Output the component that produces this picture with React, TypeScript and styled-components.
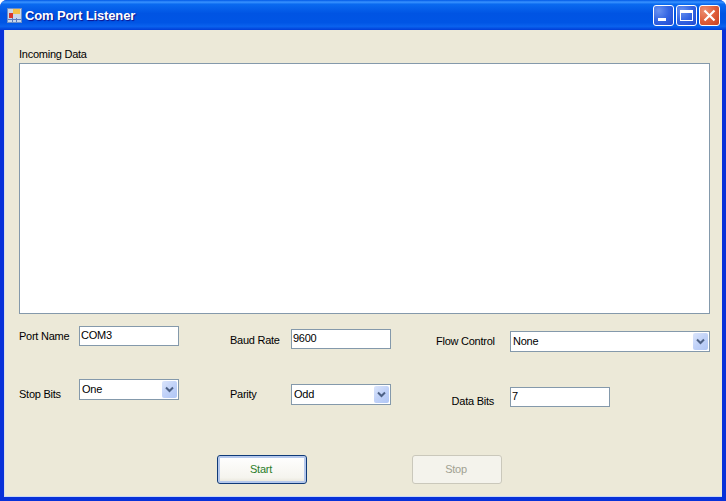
import { createGlobalStyle, styled } from "styled-components";

const GlobalStyle = createGlobalStyle`
    html, body {
        margin: 0;
        padding: 0;
        background: #ffffff;
    }
    body {
        font-family: "Liberation Sans", Arial, sans-serif;
        font-size: 11px;
        letter-spacing: -0.25px;
        color: #000000;
    }
`;

const Window = styled.div`
    width: 726px;
    height: 501px;
    display: flex;
    flex-direction: column;
    overflow: hidden;
    border-radius: 7px 7px 0 0;
    background: #0831d9;
`;

const TitleBar = styled.div`
    height: 30px;
    flex: none;
    display: flex;
    align-items: center;
    box-sizing: border-box;
    padding: 0 6px 0 7px;
    background: linear-gradient(
        180deg,
        #0058e6 0%,
        #3a93ff 7%,
        #0a6af0 14%,
        #0054e3 45%,
        #0055e5 75%,
        #0a62ee 88%,
        #003dd7 100%
    );
`;

const AppIcon = styled.svg`
    width: 15px;
    height: 15px;
    flex: none;
`;

const Title = styled.div`
    margin-left: 3px;
    flex: 1;
    font-size: 13px;
    font-weight: 700;
    letter-spacing: -0.15px;
    color: #ffffff;
    text-shadow: 1px 1px 1px #0f1089;
`;

const Controls = styled.div`
    display: flex;
    gap: 2px;
    margin-top: 1px;
`;

const ControlButton = styled.div<{ $close?: boolean }>`
    width: 21px;
    height: 21px;
    box-sizing: border-box;
    display: flex;
    align-items: center;
    justify-content: center;
    border: 1px solid #ffffff;
    border-radius: 3px;
    background: ${({ $close }) =>
        $close
            ? "radial-gradient(circle at 25% 25%, #ec8f72 0%, #e0603c 50%, #c8401f 100%)"
            : "radial-gradient(circle at 25% 25%, #6a92f0 0%, #3465e2 50%, #2148d2 100%)"};
`;

const Client = styled.div`
    flex: 1;
    margin: 0 4px 4px 4px;
    padding: 17px 12px 0 15px;
    background: #ece9d8;
    box-shadow: inset 1px 0 0 #d5dceb, inset 0 -1px 0 #c8d8f4;
    min-height: 0;
`;

const DataLabel = styled.div`
    line-height: 14px;
    height: 16px;
`;

const DataBox = styled.div`
    height: 251px;
    box-sizing: border-box;
    background: #ffffff;
    border: 1px solid #8499ab;
    width: 691px;
`;

const Fields = styled.div`
    display: grid;
    grid-template-columns: 211px 206px 1fr;
`;

const Column = styled.div`
    display: flex;
    flex-direction: column;
`;

const Field = styled.div<{ $top: number }>`
    display: flex;
    align-items: flex-start;
    margin-top: ${({ $top }) => $top}px;
`;

const FieldLabel = styled.label<{ $width: number; $dy: number; $right?: boolean }>`
    width: ${({ $width }) => $width}px;
    flex: none;
    margin-top: ${({ $dy }) => $dy}px;
    line-height: 14px;
    box-sizing: border-box;
    text-align: ${({ $right }) => ($right ? "right" : "left")};
    padding-right: ${({ $right }) => ($right ? "16px" : "0")};
`;

const TextBox = styled.input`
    width: 100px;
    height: 20px;
    box-sizing: border-box;
    padding: 0 1px 2px 1px;
    margin: 0;
    border: 1px solid #8499ab;
    border-radius: 0;
    outline: none;
    background: #ffffff;
    font: inherit;
    letter-spacing: inherit;
    color: #000000;
`;

const Combo = styled.div<{ $width: number }>`
    width: ${({ $width }) => $width}px;
    height: 21px;
    box-sizing: border-box;
    display: flex;
    align-items: center;
    justify-content: space-between;
    padding: 1px 1px 1px 2px;
    border: 1px solid #8499ab;
    background: #ffffff;
`;

const ComboText = styled.span`
    line-height: 14px;
    margin-top: -2px;
`;

const ComboArrow = styled.div`
    width: 15px;
    height: 17px;
    border-radius: 2px;
    display: flex;
    align-items: center;
    justify-content: center;
    background: linear-gradient(135deg, #dbe5fb 0%, #c1d2f8 50%, #b0c6f5 100%);
`;

const Actions = styled.div`
    display: flex;
    gap: 105px;
    margin-top: 47px;
    padding-left: 198px;
`;

const StartButton = styled.button`
    width: 90px;
    height: 29px;
    box-sizing: border-box;
    padding: 0 2px 2px 0;
    font: inherit;
    letter-spacing: inherit;
    color: #2a7d2a;
    border: 1px solid #0f3a78;
    border-radius: 3px;
    background: linear-gradient(180deg, #ffffff 0%, #f5f4ee 80%, #e6e3d6 100%);
    box-shadow: inset 0 0 0 2px #b5c8ec;
`;

const StopButton = styled.button`
    width: 90px;
    height: 29px;
    box-sizing: border-box;
    padding: 0 2px 2px 0;
    font: inherit;
    letter-spacing: inherit;
    color: #a1a192;
    border: 1px solid #cac8bb;
    border-radius: 3px;
    background: #f4f3ec;
`;

function ArrowIcon() {
    return (
        <svg width="9" height="7" viewBox="0 0 9 7">
            <path
                d="M1 1.5 L4.5 5 L8 1.5"
                fill="none"
                stroke="#4d6185"
                strokeWidth="2"
            />
        </svg>
    );
}

export default function App() {
    return (
        <>
            <GlobalStyle />
            <Window>
                <TitleBar>
                    <AppIcon viewBox="0 0 15 15">
                        <rect x="0.5" y="0.5" width="14" height="14" fill="#c9d6ea" stroke="#6f8fc4" />
                        <rect x="2" y="5" width="4" height="5" fill="#d8362a" />
                        <rect x="6" y="1" width="7" height="5" fill="#f2c14a" />
                        <path d="M1 11.5 H14 M5.5 10 V14 M9.5 10 V14" stroke="#5b7bc0" />
                    </AppIcon>
                    <Title>Com Port Listener</Title>
                    <Controls>
                        <ControlButton>
                            <svg width="15" height="15" viewBox="0 0 15 15">
                                <rect x="2" y="10" width="8" height="3" fill="#ffffff" />
                            </svg>
                        </ControlButton>
                        <ControlButton>
                            <svg width="15" height="13" viewBox="0 0 15 13">
                                <rect x="1.5" y="1.5" width="12" height="10" fill="none" stroke="#ffffff" />
                                <rect x="1" y="1" width="13" height="3" fill="#ffffff" />
                            </svg>
                        </ControlButton>
                        <ControlButton $close>
                            <svg width="13" height="13" viewBox="0 0 13 13">
                                <path d="M1.5 1.5 L11.5 11.5 M11.5 1.5 L1.5 11.5" stroke="#ffffff" strokeWidth="2.2" />
                            </svg>
                        </ControlButton>
                    </Controls>
                </TitleBar>
                <Client>
                    <DataLabel>Incoming Data</DataLabel>
                    <DataBox />
                    <Fields>
                        <Column>
                            <Field $top={12}>
                                <FieldLabel $width={60} $dy={3}>Port Name</FieldLabel>
                                <TextBox readOnly defaultValue="COM3" />
                            </Field>
                            <Field $top={33}>
                                <FieldLabel $width={60} $dy={8}>Stop Bits</FieldLabel>
                                <Combo $width={100}>
                                    <ComboText>One</ComboText>
                                    <ComboArrow><ArrowIcon /></ComboArrow>
                                </Combo>
                            </Field>
                        </Column>
                        <Column>
                            <Field $top={15}>
                                <FieldLabel $width={61} $dy={4}>Baud Rate</FieldLabel>
                                <TextBox readOnly defaultValue="9600" />
                            </Field>
                            <Field $top={35}>
                                <FieldLabel $width={61} $dy={3}>Parity</FieldLabel>
                                <Combo $width={100}>
                                    <ComboText>Odd</ComboText>
                                    <ComboArrow><ArrowIcon /></ComboArrow>
                                </Combo>
                            </Field>
                        </Column>
                        <Column>
                            <Field $top={17}>
                                <FieldLabel $width={74} $dy={3}>Flow Control</FieldLabel>
                                <Combo $width={200}>
                                    <ComboText>None</ComboText>
                                    <ComboArrow><ArrowIcon /></ComboArrow>
                                </Combo>
                            </Field>
                            <Field $top={35}>
                                <FieldLabel $width={74} $dy={7} $right>Data Bits</FieldLabel>
                                <TextBox readOnly defaultValue="7" />
                            </Field>
                        </Column>
                    </Fields>
                    <Actions>
                        <StartButton>Start</StartButton>
                        <StopButton disabled>Stop</StopButton>
                    </Actions>
                </Client>
            </Window>
        </>
    );
}
